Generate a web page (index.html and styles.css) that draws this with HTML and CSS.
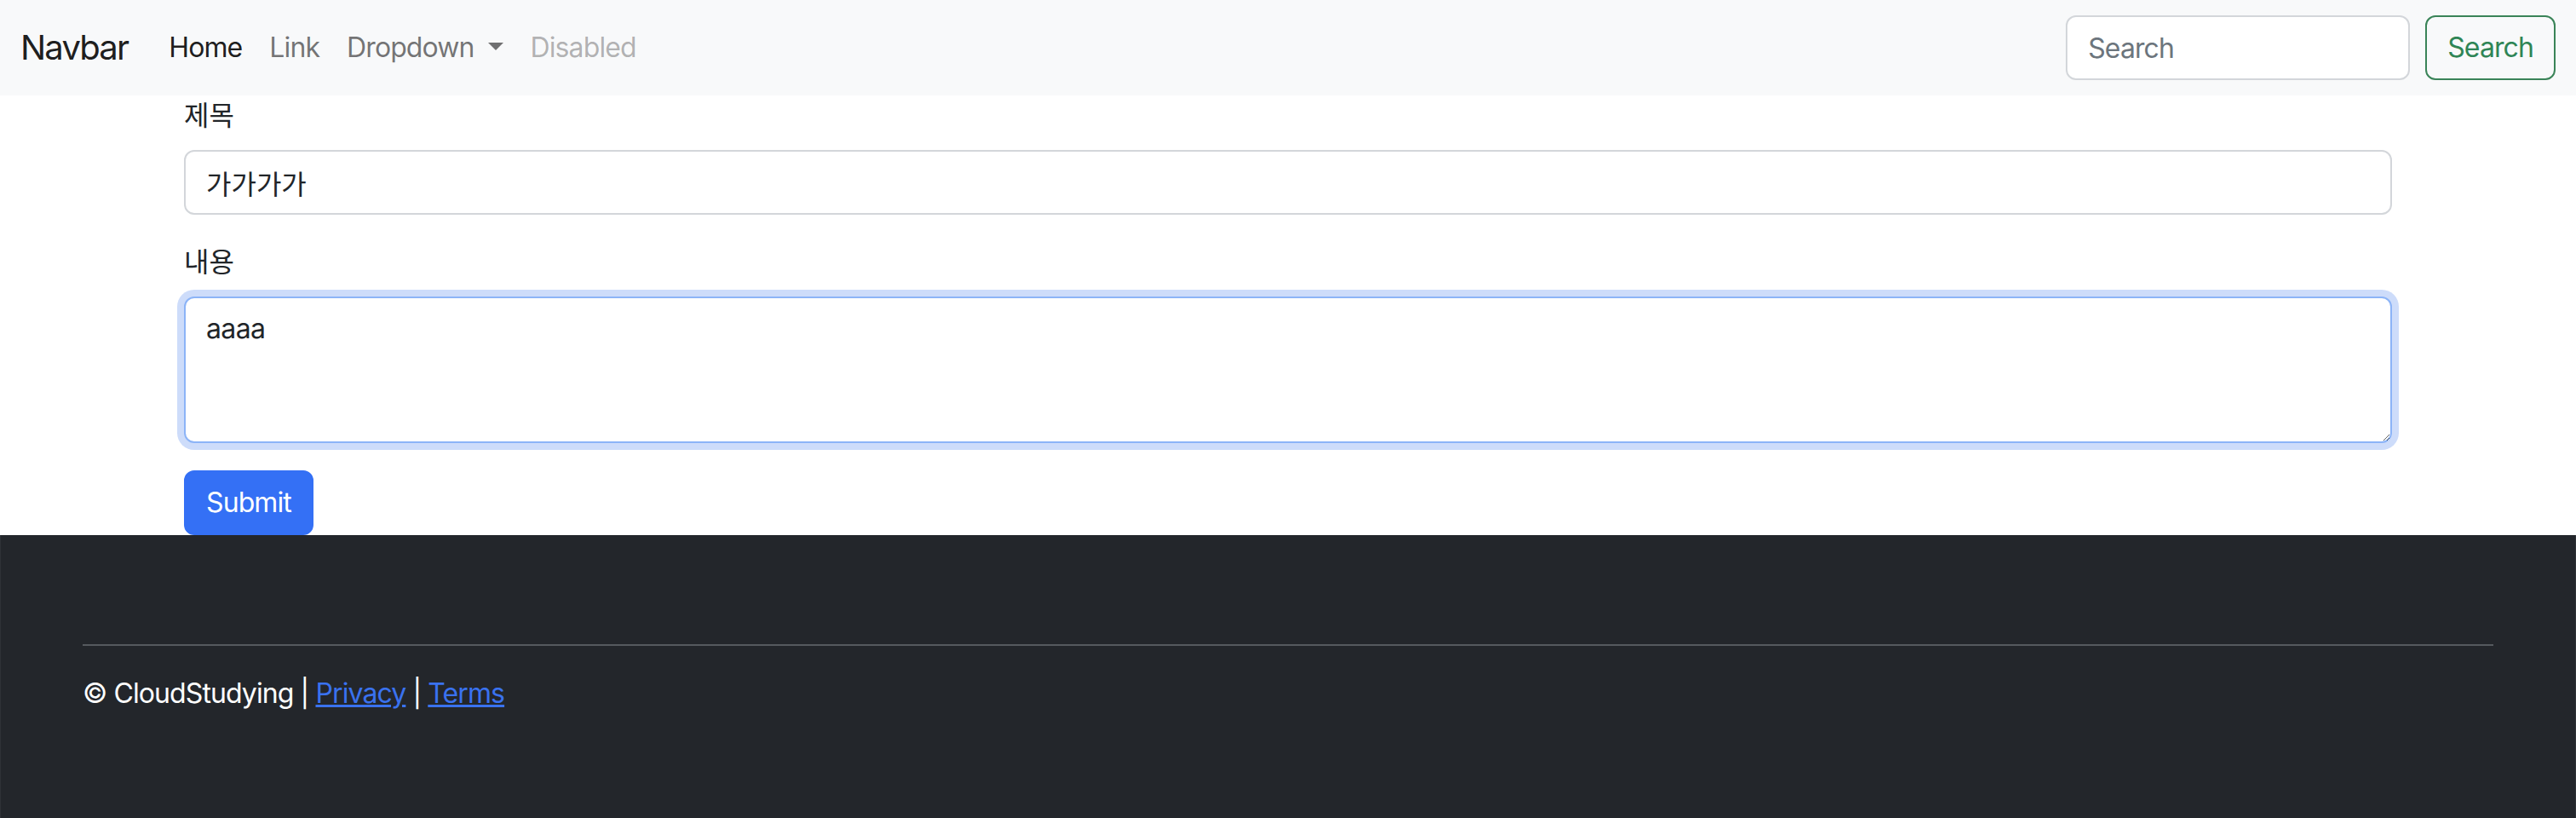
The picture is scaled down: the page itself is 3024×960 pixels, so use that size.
FILE: index.html
```html
<!DOCTYPE html>
<html lang="ko">
<head>
<meta charset="utf-8">
<title>Form</title>
<link rel="stylesheet" href="styles.css">
</head>
<body>
<nav class="navbar">
  <div class="navbar-inner">
    <a class="brand" href="#">Navbar</a>
    <ul class="nav">
      <li><a class="nav-link active" href="#">Home</a></li>
      <li><a class="nav-link" href="#">Link</a></li>
      <li><a class="nav-link dropdown" href="#">Dropdown<span class="caret"></span></a></li>
      <li><a class="nav-link disabled" href="#">Disabled</a></li>
    </ul>
    <form class="search">
      <input class="search-input" type="search" placeholder="Search">
      <button class="btn btn-outline-success" type="button">Search</button>
    </form>
  </div>
</nav>
<main class="container">
  <form>
    <div class="field">
      <label class="form-label" for="title">제목</label>
      <input class="form-control" id="title" type="text" value="가가가가">
    </div>
    <div class="field">
      <label class="form-label" for="content">내용</label>
      <textarea class="form-control textarea focused" id="content" rows="3">aaaa</textarea>
    </div>
    <button class="btn btn-primary" type="button">Submit</button>
  </form>
</main>
<footer class="footer">
  <hr class="footer-rule">
  <p class="footer-text">© CloudStudying | <a href="#">Privacy</a> | <a href="#">Terms</a></p>
</footer>
</body>
</html>
```
FILE: styles.css
```css
* { box-sizing: border-box; }
html, body { margin: 0; padding: 0; }
body {
  font-family: Inter, "Noto Sans CJK KR", "Liberation Sans", sans-serif;
  font-size: 32px;
  line-height: 1.5;
  color: #212529;
  background: #fff;
}
.navbar {
  background: #f8f9fa;
  padding: 16px 0;
}
.navbar-inner {
  display: flex;
  align-items: center;
  padding: 0 24px;
}
.brand {
  font-size: 40px;
  color: rgba(0,0,0,.9);
  text-decoration: none;
  margin-right: 32px;
  padding: 10px 0;
  line-height: 1.5;
  letter-spacing: -1.8px;
}
.nav {
  display: flex;
  list-style: none;
  margin: 0;
  padding: 0;
  flex: 1;
}
.nav-link {
  display: block;
  padding: 16px;
  color: rgba(0,0,0,.55);
  text-decoration: none;
  letter-spacing: -0.9px;
}
.nav-link.active { color: rgba(0,0,0,.9); }
.nav-link.disabled { color: rgba(0,0,0,.3); }
.caret {
  display: inline-block;
  margin-left: 16px;
  vertical-align: 8px;
  border-top: 9px solid;
  border-left: 9px solid transparent;
  border-right: 9px solid transparent;
}
.search { display: flex; align-items: center; }
.search-input {
  width: 404px;
  height: 76px;
  margin-right: 18px;
  padding: 12px 24px;
  font: inherit;
  color: #212529;
  background: #fff;
  border: 2px solid #d3d6da;
  border-radius: 12px;
  outline: none;
  letter-spacing: -0.9px;
}
.search-input::placeholder { color: #6c757d; }
.btn {
  display: inline-block;
  height: 76px;
  padding: 12px 24px;
  font: inherit;
  line-height: 1.5;
  border: 2px solid transparent;
  border-radius: 12px;
  cursor: pointer;
  letter-spacing: -0.9px;
}
.btn-outline-success {
  color: #2f8556;
  border-color: #3a8458;
  background: transparent;
}
.btn-primary {
  color: #fff;
  background: #3470f5;
  border-color: #3470f5;
}
.container {
  max-width: 2640px;
  margin: 0 auto;
  padding: 0 24px;
}
.field { margin-bottom: 32px; }
.form-label {
  display: inline-block;
  margin-bottom: 16px;
}
.form-control {
  display: block;
  width: 100%;
  padding: 12px 24px;
  font: inherit;
  color: #212529;
  background: #fff;
  border: 2px solid #d3d6da;
  border-radius: 12px;
  outline: none;
  height: 76px;
}
.textarea {
  height: 172px;
  resize: vertical;
  letter-spacing: -0.6px;
}
.focused {
  border-color: #8cb4f7;
  box-shadow: 0 0 0 8px #cddcfa;
}
.footer {
  background: #23262b;
  color: #fff;
  padding: 96px 96px 96px;
  border-left: 1px solid #2e3237;
  border-right: 1px solid #2e3237;
}
.footer-rule {
  margin: 32px 0;
  border: 0;
  border-top: 2px solid #55595e;
}
.footer-text {
  margin: 0 0 32px;
  letter-spacing: -0.9px;
}
.footer-text a { color: #3a72ef; }
```
